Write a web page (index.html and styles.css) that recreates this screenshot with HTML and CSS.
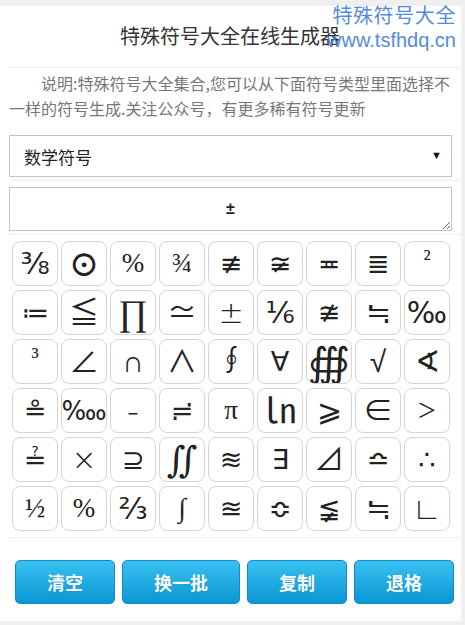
FILE: index.html
```html
<!DOCTYPE html>
<html lang="zh-CN">
<head>
<meta charset="utf-8">
<title>特殊符号大全在线生成器</title>
<link rel="stylesheet" href="styles.css">
</head>
<body>
<div class="page">
  <div class="watermark">
    <div class="wm-name">特殊符号大全</div>
    <div class="wm-url">www.tsfhdq.cn</div>
  </div>
  <header class="header">
    <h1 class="title">特殊符号大全在线生成器</h1>
  </header>
  <p class="desc">说明:特殊符号大全集合,您可以从下面符号类型里面选择不一样的符号生成.关注公众号，有更多稀有符号更新</p>
  <div class="group">
    <div class="select-wrap">
      <select class="select">
        <option>数学符号</option>
      </select>
      <span class="arrow">▼</span>
    </div>
  </div>
  <div class="group">
    <textarea class="output">±</textarea>
  </div>
  <div class="grid">
    <span class="cell frac">⅜</span>
    <span class="cell big">⊙</span>
    <span class="cell">%</span>
    <span class="cell">¾</span>
    <span class="cell sans">≢</span>
    <span class="cell sans">≆</span>
    <span class="cell sans">≖</span>
    <span class="cell sans">≣</span>
    <span class="cell sup">²</span>

    <span class="cell sans">≔</span>
    <span class="cell light">≦</span>
    <span class="cell big">∏</span>
    <span class="cell light">≃</span>
    <span class="cell light">±</span>
    <span class="cell frac">⅙</span>
    <span class="cell sans">≇</span>
    <span class="cell light">≒</span>
    <span class="cell frac">‰</span>

    <span class="cell sup">³</span>
    <span class="cell light">∠</span>
    <span class="cell light">∩</span>
    <span class="cell light">∧</span>
    <span class="cell">∮</span>
    <span class="cell sans">∀</span>
    <span class="cell huge">∰</span>
    <span class="cell light">√</span>
    <span class="cell light">∢</span>

    <span class="cell sans">≗</span>
    <span class="cell permyriad">‱</span>
    <span class="cell cjk">﹣</span>
    <span class="cell sans">≓</span>
    <span class="cell">π</span>
    <span class="cell ln">㏑</span>
    <span class="cell light">⩾</span>
    <span class="cell light">∈</span>
    <span class="cell gt">＞</span>

    <span class="cell sans">≟</span>
    <span class="cell light">×</span>
    <span class="cell sans">⊇</span>
    <span class="cell big">∬</span>
    <span class="cell sans">≋</span>
    <span class="cell sans">∃</span>
    <span class="cell light">⊿</span>
    <span class="cell sans">≏</span>
    <span class="cell sans">∴</span>

    <span class="cell">½</span>
    <span class="cell">%</span>
    <span class="cell frac">⅔</span>
    <span class="cell">∫</span>
    <span class="cell sans">≊</span>
    <span class="cell sans">≎</span>
    <span class="cell sans">≨</span>
    <span class="cell light">≒</span>
    <span class="cell light">∟</span>
  </div>
  <div class="actions">
    <button class="btn">清空</button>
    <button class="btn">换一批</button>
    <button class="btn">复制</button>
    <button class="btn">退格</button>
  </div>
</div>
</body>
</html>
```
FILE: styles.css
```css
html, body {
  margin: 0;
  padding: 0;
}
body {
  background: #efefef;
  font-family: "Liberation Sans", "Noto Sans CJK SC", sans-serif;
  color: #333;
}
.page {
  position: relative;
  width: 461px;
  height: 615px;
  margin-top: 6px;
  background: #fff;
  padding: 0 0 0 9px;
  box-sizing: border-box;
}
.watermark {
  position: absolute;
  top: -4px;
  right: 5px;
  color: #3f80d6;
  opacity: 0.9;
  z-index: 2;
  text-align: right;
  pointer-events: none;
}
.wm-name {
  font-family: "Noto Sans CJK SC", sans-serif;
  font-size: 20px;
  line-height: 26px;
  letter-spacing: 0.6px;
}
.wm-url {
  font-family: "Liberation Sans", sans-serif;
  font-size: 20px;
  line-height: 24px;
}
.header {
  height: 61px;
  border-bottom: 1px solid #eee;
  display: flex;
  align-items: center;
  justify-content: center;
}
.title {
  margin: 0 0 0 -10px;
  font-size: 20px;
  font-weight: normal;
  color: #333;
  font-family: "Noto Sans CJK SC", sans-serif;
  padding-bottom: 2px;
}
.desc {
  margin: 3px 5px 0 0;
  font-size: 16px;
  line-height: 25px;
  color: #777;
  text-indent: 2em;
  font-family: "Noto Sans CJK SC", sans-serif;
}
.group {
  border-bottom: 1px solid #eee;
  padding-bottom: 3px;
}
.select-wrap {
  position: relative;
  margin-top: 14px;
  width: 443px;
}
.select {
  display: block;
  width: 443px;
  height: 42px;
  border: 1px solid #c3c3c3;
  background: #fff;
  appearance: none;
  -webkit-appearance: none;
  padding: 0 0 0 14px;
  font-size: 17px;
  font-family: "Noto Sans CJK SC", sans-serif;
  color: #222;
  border-radius: 0;
  outline: none;
}
.arrow {
  position: absolute;
  right: 10px;
  top: 14px;
  font-size: 11px;
  color: #111;
  pointer-events: none;
}
.output {
  display: block;
  box-sizing: border-box;
  width: 443px;
  height: 44px;
  margin-top: 6px;
  border: 1px solid #c3c3c3;
  padding: 10px 4px;
  text-align: center;
  font-size: 16px;
  line-height: 22px;
  font-weight: bold;
  font-family: "Liberation Sans", sans-serif;
  color: #222;
  border-radius: 0;
  outline: none;
}
.grid {
  display: grid;
  grid-template-columns: repeat(9, 46px);
  grid-auto-rows: 45px;
  column-gap: 3px;
  row-gap: 4px;
  padding: 6px 0 6px 3px;
  border-bottom: 1px solid #eee;
}
.cell {
  box-sizing: border-box;
  border: 1px solid #d5d5d5;
  border-radius: 8px;
  display: flex;
  align-items: center;
  justify-content: center;
  font-family: "Liberation Serif", "DejaVu Serif", serif;
  font-size: 27px;
  color: #222;
  overflow: hidden;
  line-height: 1;
}
.cell.sans {
  font-family: "DejaVu Sans", sans-serif;
  font-size: 27px;
}
.cell.light {
  font-family: "DejaVu Sans", sans-serif;
  font-weight: 200;
  font-size: 30px;
}
.cell.frac {
  font-family: "DejaVu Sans", sans-serif;
  font-size: 30px;
}
.cell.permyriad {
  font-family: "DejaVu Sans", sans-serif;
  font-size: 26px;
}
.cell.big {
  font-size: 36px;
}
.cell.huge {
  font-family: "DejaVu Sans", sans-serif;
  font-size: 40px;
}
.cell.ln {
  font-size: 34px;
  font-family: "DejaVu Serif", serif;
}
.cell.cjk {
  font-family: "Noto Sans CJK SC", sans-serif;
  font-size: 24px;
  padding-bottom: 4px;
}
.cell.gt {
  font-family: "DejaVu Sans", sans-serif;
  font-weight: 200;
  font-size: 20px;
}
.cell.sup {
  font-size: 24px;
  align-items: flex-start;
  padding-top: 5px;
}
.actions {
  display: flex;
  gap: 7px;
  padding: 22px 0 0 6px;
}
.btn {
  height: 44px;
  padding: 0 31px;
  border: 1px solid #1688c6;
  border-radius: 5px;
  background: linear-gradient(to bottom, #38c1f1, #0996d4);
  color: #fff;
  font-size: 18px;
  font-weight: bold;
  font-family: "Noto Sans CJK SC", sans-serif;
  text-shadow: 0 0 1px rgba(0,0,0,0.2);
  cursor: pointer;
}
```
